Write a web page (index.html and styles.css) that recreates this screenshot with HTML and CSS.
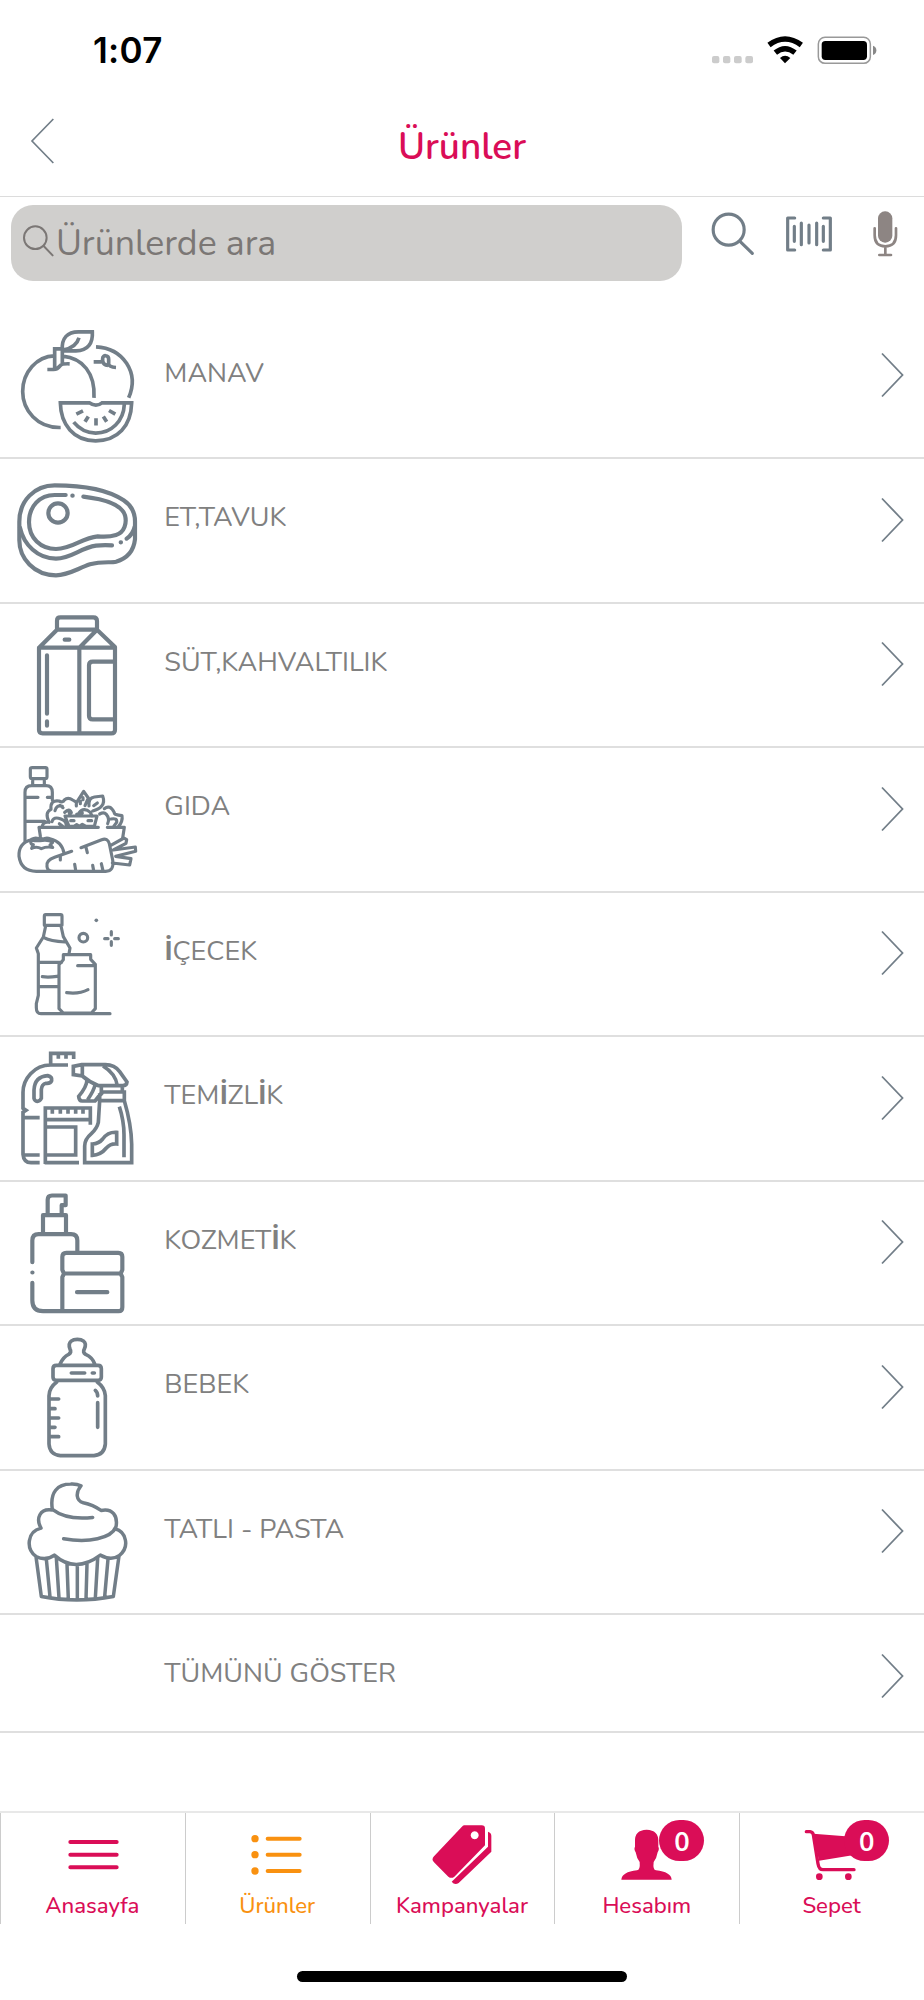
FILE: index.html
```html
<!DOCTYPE html>
<html lang="tr">
<head>
<meta charset="utf-8">
<title>Ürünler</title>
<link rel="stylesheet" href="styles.css">
</head>
<body>
<div class="screen">
  <div class="status">
    <span class="time">1:07</span>
    <svg class="status-icons" viewBox="747 105 500 90">
      <g fill="#ccc"><rect x="750" y="168" width="22" height="22" rx="6"/><rect x="783" y="168" width="22" height="22" rx="6"/><rect x="816" y="168" width="23" height="22" rx="6"/><rect x="850" y="168" width="23" height="22" rx="6"/></g>
      <path d="M921 135Q969 99 1018 135M940 158Q969 134 999 158" fill="none" stroke="#000" stroke-width="16"/>
      <path d="M954 174Q969 160 985 174L969 190Z"/>
      <rect x="1069" y="112" width="156" height="78" rx="20" fill="none" stroke="#999" stroke-width="4.5"/>
      <rect x="1079" y="123" width="136" height="57" rx="11"/>
      <path d="M1233 137Q1243 140 1243 151T1233 165Z" fill="#888"/>
    </svg>
  </div>
  <header class="header">
    <svg class="back" viewBox="90 350 75 144"><path d="M160 356L96 422L160 488"/></svg>
    <h1>Ürünler</h1>
  </header>
  <div class="search">
    <div class="field">
      <svg viewBox="65 670 100 104"><circle cx="105" cy="714" r="34"/><path d="M130 739L157 767"/></svg>
      <span>Ürünlerde ara</span>
    </div>
    <svg class="tool find" viewBox="745 625 135 150"><circle cx="801" cy="687" r="46.500"/><path d="M835 722L872 758"/></svg>
    <svg class="tool scan" viewBox="969 625 144 150"><path d="M998 652H977V748H998M1084 652H1105V748H1084M997 677V722M1018 667V732M1041 673V727M1064 667V732M1084 677V722"/></svg>
    <svg class="tool mic" viewBox="1229 625 78 150"><rect x="1247" y="632" width="43" height="94" rx="21"/><path d="M1237 683V704Q1237 737 1269 737T1301 704V683M1269 738V762M1251 763H1286"/></svg>
  </div>
  <main class="list">
    <a class="row"><svg class="icon" viewBox="0 13.500 450 426"><path d="M182 351C112 353 68 299 68 243C68 185 111 137 163 136M188 137C248 143 286 188 282 262M288 109C369 113 419 186 386 262M164 176V115H187V162M142 177H160Q173 176 180 166Q185 159 209 160M187 119C184 82 203 64 235 64H277C279 97 265 121 228 121H190M189 119C216 114 231 104 237 82M281 154H302Q309 153 308 144C308 133 326 132 326 146V161Q328 170 348 171M308 151Q310 163 324 165M181 277H268Q288 291 306 277H395C393 347 353 391 287 391S182 342 181 277ZM373 281C371 332 334 368 287 368Q247 367 221 335M229 311L249 301M255 334L265 318M288 323V345M320 334L310 318M346 311L327 300"/></svg><span class="name">MANAV</span><svg class="chev" viewBox="0 0 24 46"><path d="M2 1.500L22.500 23L2 44.500"/></svg></a>
    <a class="row"><svg class="icon bold" viewBox="0 447 450 426"><path d="M58 635C58 572 104 526 164 526C250 526 321 537 371 571Q405 594 405 634V688Q399 741 348 755C332 759 306 753 270 763C232 776 204 796 168 796C102 796 58 745 58 691Z"/><path d="M60 653C71 704 113 746 168 746C214 746 240 714 288 707Q310 704 336 706M362 697h1M380 686Q399 672 404 650M197 555H164C119 555 87 589 87 637C87 684 122 717 168 717C219 717 243 684 293 679Q326 682 348 675C374 667 381 639 375 616C367 588 327 575 298 568Q274 563 250 560M217 557h1"/><circle cx="174" cy="609" r="29"/></svg><span class="name">ET,TAVUK</span><svg class="chev" viewBox="0 0 24 46"><path d="M2 1.500L22.500 23L2 44.500"/></svg></a>
    <a class="row"><svg class="icon bold" viewBox="0 11 450 426"><path d="M171 88V61Q171 51 181 51H280Q291 51 291 62V88ZM171 88L117 142V389Q117 399 128 399H334Q345 399 345 388V140L291 88L238 142V399M117 142H345M345 184H278Q267 184 267 195V346Q267 357 278 357H345M141 165V340M141 363V376M194 118H208"/></svg><span class="name">SÜT,KAHVALTILIK</span><svg class="chev" viewBox="0 0 24 46"><path d="M2 1.500L22.500 23L2 44.500"/></svg></a>
    <a class="row"><svg class="icon round" viewBox="0 444 450 426"><path d="M97 503H136Q141 503 141 508V530Q141 536 135 536H97Q91 536 91 530V508Q91 503 97 503ZM98 540V555M133 540V555M75 725V577Q75 557 95 557H138Q157 557 157 577V600M77 592H114M142 592H157M77 664H134"/><path d="M368 714L373 682H322M295 682H117L121 708M126 680Q130 663 147 667Q133 637 153 628Q150 599 177 603Q189 609 193 600Q204 590 218 600L230 607L251 574L265 594L255 617M229 606V618M241 603V611M249 593V599M267 618Q265 593 283 591L308 588Q315 607 305 618Q297 628 278 633M281 617L292 609M313 626Q330 612 343 638Q342 645 366 647Q369 664 355 680M299 642Q312 635 319 643Q330 656 323 671M333 657Q352 653 350 667L341 679M165 632Q170 613 187 619M180 616L189 623M194 637Q208 623 214 638M206 632Q208 640 211 647M237 639Q251 620 271 637L276 648M247 639L230 643M156 665Q160 648 183 657Q202 664 198 679M178 671L188 679M195 648H291L283 679H207ZM212 662H222M264 662H275M222 679L230 674L238 679L247 673L258 679"/><path d="M94 719Q55 729 57 769Q63 814 109 814M94 718Q106 711 115 716L121 713L127 718Q139 711 150 716Q187 725 192 760M94 732Q88 718 105 722L119 722Q145 717 158 727L150 735L158 742Q139 739 124 746Q110 738 95 745L100 734ZM109 814H317Q343 814 338 780L328 731Q323 713 305 719L243 743M215 754L164 772Q137 781 141 800Q142 814 160 814M181 769V780M258 742L262 758M224 793L227 811M278 796L281 812M304 791L309 812M331 737L372 714L380 719L378 730L340 750L406 741L407 754L347 769L393 776L389 795L337 789"/></svg><span class="name">GIDA</span><svg class="chev" viewBox="0 0 24 46"><path d="M2 1.500L22.500 23L2 44.500"/></svg></a>
    <a class="row"><svg class="icon round" viewBox="0 8 450 426"><path d="M137 73H182Q186 73 186 78V105H133V78Q133 73 137 73ZM137 107L130 140L109 173L115 190V315L109 340V352Q109 370 123 370H330M183 107L190 139L210 173L207 190M132 142Q151 153 195 155M116 216H185M127 259Q145 262 171 258M117 289H176M190 193H272V207L286 222V355L274 368H190L177 355V223L190 208ZM233 226H286M200 307Q237 312 264 298M314 145H324M344 145H355M334 124V134M334 154V165"/><circle cx="250" cy="142" r="13"/><circle class="dot" cx="289" cy="90" r="5.500"/></svg><span class="name"><b>İ</b>ÇECEK</span><svg class="chev" viewBox="0 0 24 46"><path d="M2 1.500L22.500 23L2 44.500"/></svg></a>
    <a class="row"><svg class="icon" viewBox="0 442 450 426"><path d="M152 522V491H221V508M175 493V507M198 493V507M204 526H152C102 526 69 568 69 608V656L78 662L69 668V794Q71 819 93 819H119M70 684H119M71 796H119M102 626V601Q104 561 143 558Q157 561 155 573Q152 582 138 581Q125 584 124 600V626Q120 635 112 635Q104 634 102 626ZM136 823V655H271V705M137 690H271M157 659V672M181 659V672M204 659V672M227 659V672M249 659V672M138 712H227V796H138M134 819H237M220 530L245 525H316Q344 525 359 546L381 577Q380 588 368 588H296Q269 578 247 559L220 555ZM247 527V559M309 529Q347 552 352 588M261 571Q260 592 236 620Q237 634 246 634H285L307 609M285 586Q282 602 263 630M304 592V610L285 634M307 607H373V633H299V611M367 590V607M299 633L295 698Q291 716 274 732Q254 749 254 769V819H395V763Q394 705 373 633M358 651Q372 694 372 735V803M277 763Q297 762 308 748Q324 726 350 728V763Q332 761 319 775Q302 796 277 797Z"/></svg><span class="name">TEM<b>İ</b>ZL<b>İ</b>K</span><svg class="chev" viewBox="0 0 24 46"><path d="M2 1.500L22.500 23L2 44.500"/></svg></a>
    <a class="row"><svg class="icon bold" viewBox="0 5.400 450 426"><path d="M143 105V59Q143 46 156 46H197V75H185V103M129 160V105H198V160M97 246V181Q97 162 116 162H213Q232 162 232 181V212M97 277h.5M97 308V361Q97 393 129 393H356Q367 393 367 381V291L362 280L367 269V230Q367 218 355 218H199Q187 218 187 230V269L192 280L187 291V390M192 280H362M231 336H322"/></svg><span class="name">KOZMET<b>İ</b>K</span><svg class="chev" viewBox="0 0 24 46"><path d="M2 1.500L22.500 23L2 44.500"/></svg></a>
    <a class="row"><svg class="icon" stroke-linecap="round" viewBox="0 439 450 426"><path d="M179 555Q190 531 206 524Q216 518 210 508C201 484 221 479 232 479S264 484 253 508Q247 518 257 524Q278 533 285 555M169 557H294Q304 557 304 567V592Q304 602 294 602H169Q159 602 159 592V567Q159 557 169 557ZM171 606Q147 624 147 648V793Q149 825 181 828H282Q313 825 316 793V648Q315 624 291 606M151 658H176M151 687H165M151 715H176M151 743H165M151 771H176M214 580H254M277 580H283M286 632Q293 638 293 649M293 669V743"/></svg><span class="name">BEBEK</span><svg class="chev" viewBox="0 0 24 46"><path d="M2 1.500L22.500 23L2 44.500"/></svg></a>
    <a class="row"><svg class="icon cake" viewBox="0 2.700 450 426"><path d="M157 118C149 66 173 42 212 42Q230 41 243 47C226 68 228 92 250 98Q279 104 303 121C338 113 354 139 348 170C334 205 266 219 191 206M157 118Q200 151 278 142M157 120C119 114 107 145 123 174C81 184 77 236 108 259Q137 274 163 255Q226 311 301 255Q333 273 357 257C391 231 378 184 345 176M108 260L124 379Q229 400 340 379L357 258M139 267L150 380M169 263L177 383M201 282L205 388M232 287V389M261 282L258 387M293 265L286 384M324 267L314 380"/></svg><span class="name">TATLI - PASTA</span><svg class="chev" viewBox="0 0 24 46"><path d="M2 1.500L22.500 23L2 44.500"/></svg></a>
    <a class="row last"><span class="icon"></span><span class="name">TÜMÜNÜ GÖSTER</span><svg class="chev" viewBox="0 0 24 46"><path d="M2 1.500L22.500 23L2 44.500"/></svg></a>
  </main>
  <nav class="tabs">
    <a class="tab"><svg viewBox="4 66 552 234"><path class="line" d="M212 156H351M212 194H351M212 232H351"/></svg><span>Anasayfa</span></a>
    <a class="tab active"><svg viewBox="559 66 552 234"><path class="line" d="M804 146H900M804 194H900M804 243H900"/><circle cx="766" cy="146" r="11"/><circle cx="766" cy="194" r="11"/><circle cx="766" cy="243" r="11"/></svg><span>Ürünler</span></a>
    <a class="tab"><svg viewBox="-273 66 552 234"><path fill-rule="evenodd" d="M6 106H59Q69 106 69 116V166L-23 260Q-32 267 -41 260L-84 217Q-93 209 -84 199L-1 111Q3 106 6 106ZM38 124A12 12 0 1 0 38.100 124Z"/><path d="M78 125Q88 128 88 137V185L-10 279Q-22 287 -31 275L78 170Z"/></svg><span>Kampanyalar</span></a>
    <a class="tab"><svg viewBox="281 66 552 234"><path d="M556 119Q592 120 591 155V170Q595 177 589 187Q586 205 577 216Q574 240 584 241Q629 246 631 269H480Q482 246 527 241Q537 240 535 216Q526 205 523 187Q517 177 521 170V155Q519 120 556 119Z"/></svg><span>Hesabım</span><i class="badge">0</i></a>
    <a class="tab"><svg viewBox="836 66 552 234"><path d="M1056 131L1210 143V190L1073 212Z"/><path class="thin" d="M1035 125H1046Q1054 126 1056 134L1070 221Q1073 239 1085 239H1178"/><circle cx="1074" cy="260" r="10"/><circle cx="1161" cy="260" r="10"/></svg><span>Sepet</span><i class="badge">0</i></a>
  </nav>
  <div class="home"></div>
</div>
</body>
</html>
```
FILE: styles.css
```css
* { box-sizing: border-box; }
body { margin: 0; background: #fff; font-family: "Nunito", "Lato", sans-serif; }
svg { display: block; flex: none; }
.screen { width: 924px; height: 2000px; overflow: hidden; display: flex; flex-direction: column; }
.status { height: 100px; flex: none; display: flex; justify-content: space-between; padding: 29px 46.300px 0 93px; }
.time { font: 600 35px/42px "Inter", sans-serif; letter-spacing: .3px; }
.status-icons { width: 166.700px; height: 30px; margin-top: 6px; }
.header { height: 97px; flex: none; display: grid; grid-template-columns: 64px 1fr 64px; padding-top: 16.700px; border-bottom: 1.500px solid #dcdcdc; }
.back { width: 25px; height: 48px; margin-left: 30px; fill: none; stroke: #727e88; stroke-width: 5; }
h1 { margin: 8px 0 0; font-size: 37px; line-height: 44px; font-weight: 650; text-align: center; color: #da0d57; }
.search { height: 117.500px; flex: none; display: flex; align-items: flex-start; padding: 8px 0 0 11.300px; }
.field { width: 670.700px; height: 76px; border-radius: 22px; background: #d0cfcd; display: flex; align-items: flex-start; padding: 18.300px 0 0 10.300px; color: #7b7775; font-size: 35.700px; line-height: 42px; font-weight: 450; }
.field svg { width: 33.300px; height: 34.700px; margin-right: 1px; fill: none; stroke: #7b7775; stroke-width: 6; stroke-linecap: round; }
.tool { height: 50px; margin-top: 4px; fill: none; stroke: #727e88; stroke-width: 9.500; stroke-linecap: round; stroke-linejoin: round; }
.find { width: 45px; margin-left: 28.300px; }
.scan { width: 48px; margin-left: 29.700px; }
.mic { width: 26px; margin-left: 38.700px; stroke: #8d8583; stroke-width: 8; }
.mic rect { fill: #8d8583; stroke: none; }
.list { flex: none; }
.row { height: 144.550px; display: flex; align-items: flex-start; border-bottom: 2px solid #dfdfdf; }
.row.last { height: 118px; }
.icon { width: 150px; height: 142px; flex: none; fill: none; stroke: #727e88; stroke-width: 11; }
.bold { stroke-width: 12.500; stroke-linecap: round; stroke-linejoin: round; }
.round { stroke-width: 9.500; stroke-linecap: round; stroke-linejoin: round; }
.cake { stroke-width: 10.500; stroke-linecap: round; stroke-linejoin: round; }
.dot { fill: #727e88; stroke: none; }
.last .icon { height: 100px; }
.name { flex: 1; margin: 42px 0 0 14.300px; font-size: 27px; line-height: 34px; font-weight: 450; color: #808080; white-space: nowrap; }
.name b { font-family: "Open Sans", sans-serif; font-weight: 700; font-size: 26px; line-height: 1; letter-spacing: -.5px; }
.chev { width: 24px; height: 46px; margin: 37.500px 19.800px 0 0; fill: none; stroke: #727e88; stroke-width: 1.800; }
.tabs { flex: none; margin-top: 77.500px; height: 113px; display: grid; grid-template-columns: repeat(5, 184.800px); border-top: 2px solid #e8e8e8; }
.tab { position: relative; display: flex; flex-direction: column; align-items: center; border-left: 1px solid #ccc; color: #da0d57; }
.tab svg { width: 184px; height: 78px; margin: -1px 0 0; fill: currentColor; }
.tab .line { fill: none; stroke: currentColor; stroke-width: 12; stroke-linecap: round; }
.tab .thin { fill: none; stroke: currentColor; stroke-width: 10; stroke-linecap: round; }
.tab span { font-size: 22.200px; line-height: 26px; margin: 3px 1px 0 0; font-weight: 500; white-space: nowrap; }
.active { color: #f99110; }
.badge { position: absolute; left: 104px; top: 7.500px; width: 45px; height: 41px; border-radius: 20.500px; background: #da0d57; color: #fff; font: 600 27px/41px "Open Sans", sans-serif; text-align: center; }
.home { flex: none; width: 330px; height: 11px; border-radius: 6px; background: #000; margin: 47px auto 0; }
```
